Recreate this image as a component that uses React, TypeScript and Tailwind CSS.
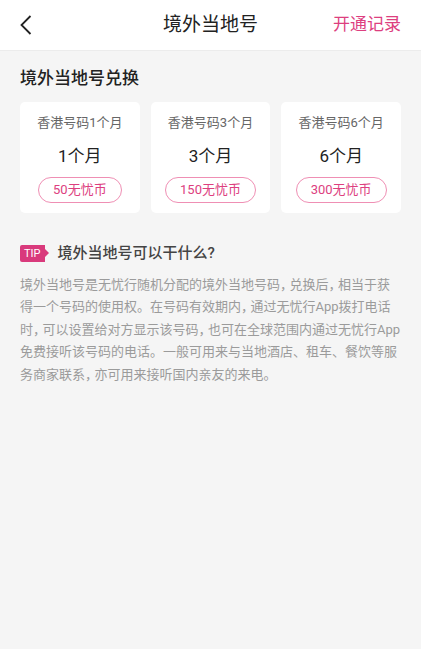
const font = "font-['Roboto','Noto_Sans_CJK_SC',sans-serif]"

const plans = [
  { name: '香港号码1个月', label: '1个月', price: '50无忧币' },
  { name: '香港号码3个月', label: '3个月', price: '150无忧币' },
  { name: '香港号码6个月', label: '6个月', price: '300无忧币' },
]

const intro =
  '境外当地号是无忧行随机分配的境外当地号码，兑换后，相当于获得一个号码的使用权。在号码有效期内，通过无忧行App拨打电话时，可以设置给对方显示该号码，也可在全球范围内通过无忧行App免费接听该号码的电话。一般可用来与当地酒店、租车、餐饮等服务商家联系，亦可用来接听国内亲友的来电。'

// the app renders full-width commas narrow, so tighten them
function Narrow({ text }: { text: string }) {
  const parts = text.split('，')
  return (
    <>
      {parts.map((s, i) => (
        <span key={i}>
          {s}
          {i < parts.length - 1 && <span className="tracking-[-3.5px]">，</span>}
        </span>
      ))}
    </>
  )
}

export default function App() {
  return (
    <div className={`${font} w-[421px] h-[649px] bg-[#f5f5f5] flex flex-col`}>
      {/* header */}
      <div className="h-[51px] bg-white border-b border-[#ececec] flex items-center px-5 relative">
        <svg width="12" height="20" viewBox="0 0 12 20" className="shrink-0">
          <path d="M10.5 1 L1.5 10 L10.5 19" fill="none" stroke="#222" strokeWidth="1.8" />
        </svg>
        <span className="absolute left-0 right-0 text-center text-[19px] text-[#222] pointer-events-none">境外当地号</span>
        <span className="ml-auto text-[17px] text-[#dd3f7f]">开通记录</span>
      </div>

      {/* exchange */}
      <div className="px-5 pt-[15px]">
        <div className="text-[17px] font-medium text-[#222] leading-6">境外当地号兑换</div>
        <div className="mt-[12px] grid grid-cols-3 gap-[11px]">
          {plans.map((p) => (
            <div key={p.name} className="bg-white rounded-[5px] h-[111px] flex flex-col items-center pt-[11px]">
              <span className="text-[13px] text-[#666] leading-5">{p.name}</span>
              <span className="mt-[11px] text-[17px] text-[#222] leading-6">{p.label}</span>
              <span className="mt-[9px] h-[26px] px-[14px] rounded-full border border-[#ef8fb4] text-[13px] text-[#dd3f7f] flex items-center">
                {p.price}
              </span>
            </div>
          ))}
        </div>
      </div>

      {/* tip */}
      <div className="px-5 mt-[29px]">
        <div className="flex items-center">
          <div className="flex items-center">
            <span className="h-[17px] px-[4px] bg-[#d93a7c] rounded-l-[2px] text-white text-[11px] leading-[17px]">TIP</span>
            <span className="w-0 h-0 border-y-[4px] border-y-transparent border-l-[4px] border-l-[#d93a7c]" />
          </div>
          <span className="ml-[9px] text-[15px] font-medium text-[#444]">境外当地号可以干什么?</span>
        </div>
        <p className="mt-[9px] text-[13px] leading-[22.5px] text-[#9b9b9b]">
          <Narrow text={intro} />
        </p>
      </div>
    </div>
  )
}
